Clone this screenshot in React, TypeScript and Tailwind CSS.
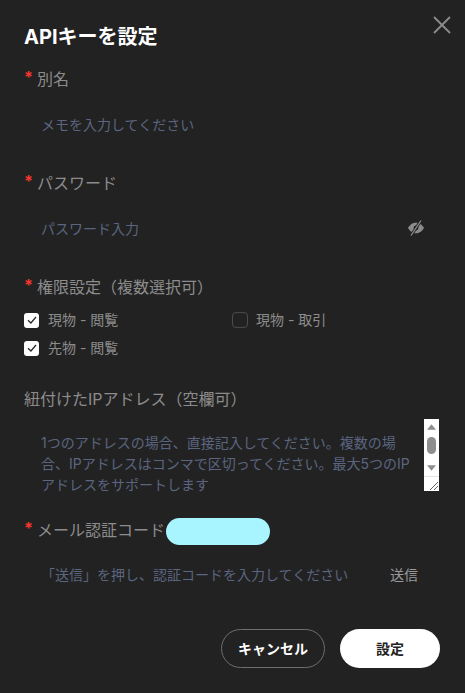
import React from 'react';

const fontStack = 'font-[Inter,"Noto_Sans_CJK_JP",sans-serif]';

const Label: React.FC<{ text: string; required?: boolean; className?: string }> = ({ text, required = true, className = '' }) => (
  <div className={`flex h-[22px] items-center text-[16px] leading-[22px] text-[#8c8c8c] ${className}`}>
    {required && <span className="mr-[5px] w-[8px] -translate-y-[2px] text-[16px] font-bold text-[#f5372d]">*</span>}
    <span>{text}</span>
  </div>
);

const CheckItem: React.FC<{ text: string; checked?: boolean; className?: string }> = ({ text, checked = false, className = '' }) => (
  <div className={`flex items-center ${className}`}>
    {checked ? (
      <span className="mr-[9px] flex h-[15px] w-[15px] items-center justify-center rounded-[3px] bg-white">
        <svg viewBox="0 0 12 12" className="h-[12px] w-[12px]" fill="none" stroke="#2b2b2b" strokeWidth="1.3">
          <path d="M2 6.2 L4.9 9 L10 3" />
        </svg>
      </span>
    ) : (
      <span className="mr-[8px] h-[16px] w-[16px] rounded-[4px] border border-[#4a4a4a]" />
    )}
    <span className="text-[14px] leading-[20px] text-[#8c8c8c]">{text}</span>
  </div>
);

const App: React.FC = () => {
  return (
    <div className={`relative h-[693px] w-[465px] overflow-hidden bg-[#222222] px-[24px] pt-[25px] ${fontStack}`}>
      <svg viewBox="0 0 18 18" className="absolute left-[433px] top-[16px] h-[18px] w-[18px]" fill="none" stroke="#8c8c8c" strokeWidth="1.8">
        <path d="M1 1 L17 17 M17 1 L1 17" />
      </svg>

      <h1 className="h-[24px] text-[20px] font-bold leading-[24px] text-white">APIキーを設定</h1>

      <Label text="別名" className="mt-[19px]" />
      <div className="mt-[12px] flex h-[44px] items-center pl-[17px] text-[14px] text-[#5b6580]">メモを入力してください</div>

      <Label text="パスワード" className="mt-[26px]" />
      <div className="mt-[12px] flex h-[44px] items-center justify-between pl-[17px] pr-[16px] text-[14px] text-[#5b6580]">
        <span>パスワード入力</span>
        <svg viewBox="0 0 18 18" className="h-[18px] w-[18px]" fill="none">
          <path d="M1 9 C3.5 5 6 3.8 9 3.8 C12 3.8 14.5 5 17 9 C14.5 13 12 14.2 9 14.2 C6 14.2 3.5 13 1 9 Z" fill="#8c8c8c" />
          <circle cx="9" cy="9" r="2.4" fill="#222222" />
          <path d="M14 1.5 L4 16.5" stroke="#222222" strokeWidth="3" />
          <path d="M14 1.5 L4 16.5" stroke="#8c8c8c" strokeWidth="1.3" />
        </svg>
      </div>

      <Label text="権限設定（複数選択可）" className="mt-[26px]" />
      <div className="mt-[12px] flex h-[20px] items-center">
        <CheckItem text="現物 - 閲覧" checked className="w-[208px]" />
        <CheckItem text="現物 - 取引" />
      </div>
      <CheckItem text="先物 - 閲覧" checked className="mt-[8px] h-[20px]" />

      <Label text="紐付けたIPアドレス（空欄可）" required={false} className="mt-[30px]" />
      <div className="mt-[9px] flex h-[72px]">
        <div className="w-[400px] pl-[17px] pt-[13px] text-[14px] leading-[21px] text-[#5b6580]">
          1つのアドレスの場合、直接記入してください。複数の場<br />
          合、IPアドレスはコンマで区切ってください。最大5つのIP<br />
          アドレスをサポートします
        </div>
        <div className="flex w-[15px] flex-col items-center bg-white">
          <svg viewBox="0 0 10 6" className="mt-[5px] h-[6px] w-[9px]"><path d="M5 0 L10 6 L0 6 Z" fill="#8e8e8e" /></svg>
          <span className="mt-[7px] h-[17px] w-[9px] rounded-full bg-[#8e8e8e]" />
          <svg viewBox="0 0 10 6" className="mt-[11px] h-[6px] w-[9px]"><path d="M0 0 L10 0 L5 6 Z" fill="#8e8e8e" /></svg>
          <div className="mt-[5px] flex h-[15px] w-full items-end justify-end border-t border-[#e3e3e3]">
            <svg viewBox="0 0 8 8" className="mb-[1px] mr-[1px] h-[8px] w-[8px]" fill="none" stroke="#555555" strokeWidth="0.9">
              <path d="M0 8 L8 0 M4 8 L8 4" />
            </svg>
          </div>
        </div>
      </div>

      <div className="mt-[27px] flex h-[27px] items-center">
        <Label text="メール認証コード" className="-translate-y-[2px]" />
        <span className="ml-[1px] h-[27px] w-[104px] rounded-full bg-[#a8f5ff]" />
      </div>
      <div className="mt-[7px] flex h-[44px] items-center justify-between pl-[17px] text-[14px]">
        <span className="text-[#5b6580]">「送信」を押し、認証コードを入力してください</span>
        <span className="mr-[23px] text-[14px] text-[#999999]">送信</span>
      </div>

      <div className="mt-[33px] flex justify-end gap-[15px] pr-[1px]">
        <button className="h-[39px] w-[104px] rounded-full border border-[#6e6e6e] text-[14px] font-bold text-white">キャンセル</button>
        <button className="h-[39px] w-[100px] rounded-full bg-white text-[14px] font-bold text-[#222222]">設定</button>
      </div>
    </div>
  );
};

export default App;
